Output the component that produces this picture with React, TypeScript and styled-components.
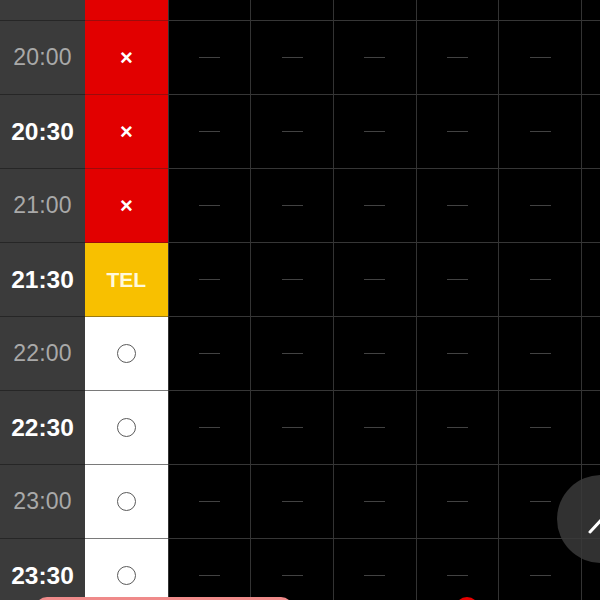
import React from "react";
import styled, { createGlobalStyle } from "styled-components";

const Global = createGlobalStyle`
  html, body { margin: 0; padding: 0; background: #000; }
  body { font-family: "Liberation Sans", Arial, sans-serif; overflow: hidden; }
`;

const Screen = styled.div`
  position: relative;
  width: 600px;
  height: 600px;
  overflow: hidden;
  background: #000;
`;

const Table = styled.div`
  display: grid;
  grid-template-columns: 85px repeat(7, 82.7px);
  grid-template-rows: 21px;
  grid-auto-rows: 74px;
`;

const TimeCell = styled.div<{ $bold: boolean }>`
  display: flex;
  align-items: center;
  justify-content: center;
  background: #3b3b3b;
  border-bottom: 1px solid #262626;
  color: ${(p) => (p.$bold ? "#ffffff" : "#a9a9a9")};
  font-weight: ${(p) => (p.$bold ? 700 : 400)};
  font-size: ${(p) => (p.$bold ? "24.5px" : "23px")};
  letter-spacing: ${(p) => (p.$bold ? "0" : "0.2px")};
`;

type Kind = "full" | "tel" | "open";

const colors: Record<Kind, string> = {
  full: "#e20000",
  tel: "#f8c000",
  open: "#ffffff",
};
const lines: Record<Kind, string> = {
  full: "#9c0c0c",
  tel: "#9b7a10",
  open: "#7a7a7a",
};

const StatusCell = styled.div<{ $kind: Kind }>`
  display: flex;
  align-items: center;
  justify-content: center;
  background: ${(p) => colors[p.$kind]};
  border-bottom: 1px solid ${(p) => lines[p.$kind]};
`;

const Cross = styled.span`
  color: #fff;
  font-weight: 700;
  font-size: 22px;
  line-height: 1;
`;

const Tel = styled.span`
  color: #fff9dc;
  font-weight: 700;
  font-size: 21px;
  line-height: 1;
`;

const Ring = styled.span`
  width: 17px;
  height: 17px;
  border: 1px solid #5a5a5a;
  border-radius: 50%;
`;

const EmptyCell = styled.div`
  display: flex;
  align-items: center;
  justify-content: center;
  border-left: 1px solid #333;
  border-bottom: 1px solid #363636;
  background: #000;
`;

const Dash = styled.span`
  width: 21px;
  height: 1px;
  background: #424242;
`;

const ScrollTop = styled.button`
  position: absolute;
  left: 557px;
  top: 475px;
  width: 88px;
  height: 88px;
  border-radius: 50%;
  border: none;
  padding: 0;
  background: rgba(58, 58, 58, 0.85);
  display: flex;
  align-items: center;
  justify-content: flex-start;
`;

const PinkBar = styled.div`
  position: absolute;
  left: 35px;
  top: 597px;
  width: 258px;
  height: 40px;
  border-radius: 12px;
  background: #f08a8a;
`;

const RedDot = styled.div`
  position: absolute;
  left: 455px;
  top: 597px;
  width: 24px;
  height: 24px;
  border-radius: 50%;
  background: #e60000;
`;

const rows: { time: string; kind: Kind; partial?: boolean }[] = [
  { time: "19:30", kind: "full", partial: true },
  { time: "20:00", kind: "full" },
  { time: "20:30", kind: "full" },
  { time: "21:00", kind: "full" },
  { time: "21:30", kind: "tel" },
  { time: "22:00", kind: "open" },
  { time: "22:30", kind: "open" },
  { time: "23:00", kind: "open" },
  { time: "23:30", kind: "open" },
];

export default function App() {
  return (
    <Screen>
      <Global />
      <Table>
        {rows.map((r) => (
          <React.Fragment key={r.time}>
            <TimeCell $bold={r.time.endsWith(":30")}>{!r.partial && r.time}</TimeCell>
            <StatusCell $kind={r.kind}>
              {!r.partial && r.kind === "full" && <Cross>×</Cross>}
              {!r.partial && r.kind === "tel" && <Tel>TEL</Tel>}
              {!r.partial && r.kind === "open" && <Ring />}
            </StatusCell>
            {Array.from({ length: 6 }).map((_, i) => (
              <EmptyCell key={i}>{!r.partial && <Dash />}</EmptyCell>
            ))}
          </React.Fragment>
        ))}
      </Table>
      <ScrollTop aria-label="scroll to top">
        <svg width="60" height="60" viewBox="0 0 60 60" style={{ marginLeft: 20 }}>
          <polyline
            points="13,43 26,29 39,43"
            fill="none"
            stroke="#fff"
            strokeWidth="3"
            strokeLinecap="round"
            strokeLinejoin="round"
          />
        </svg>
      </ScrollTop>
      <PinkBar />
      <RedDot />
    </Screen>
  );
}
